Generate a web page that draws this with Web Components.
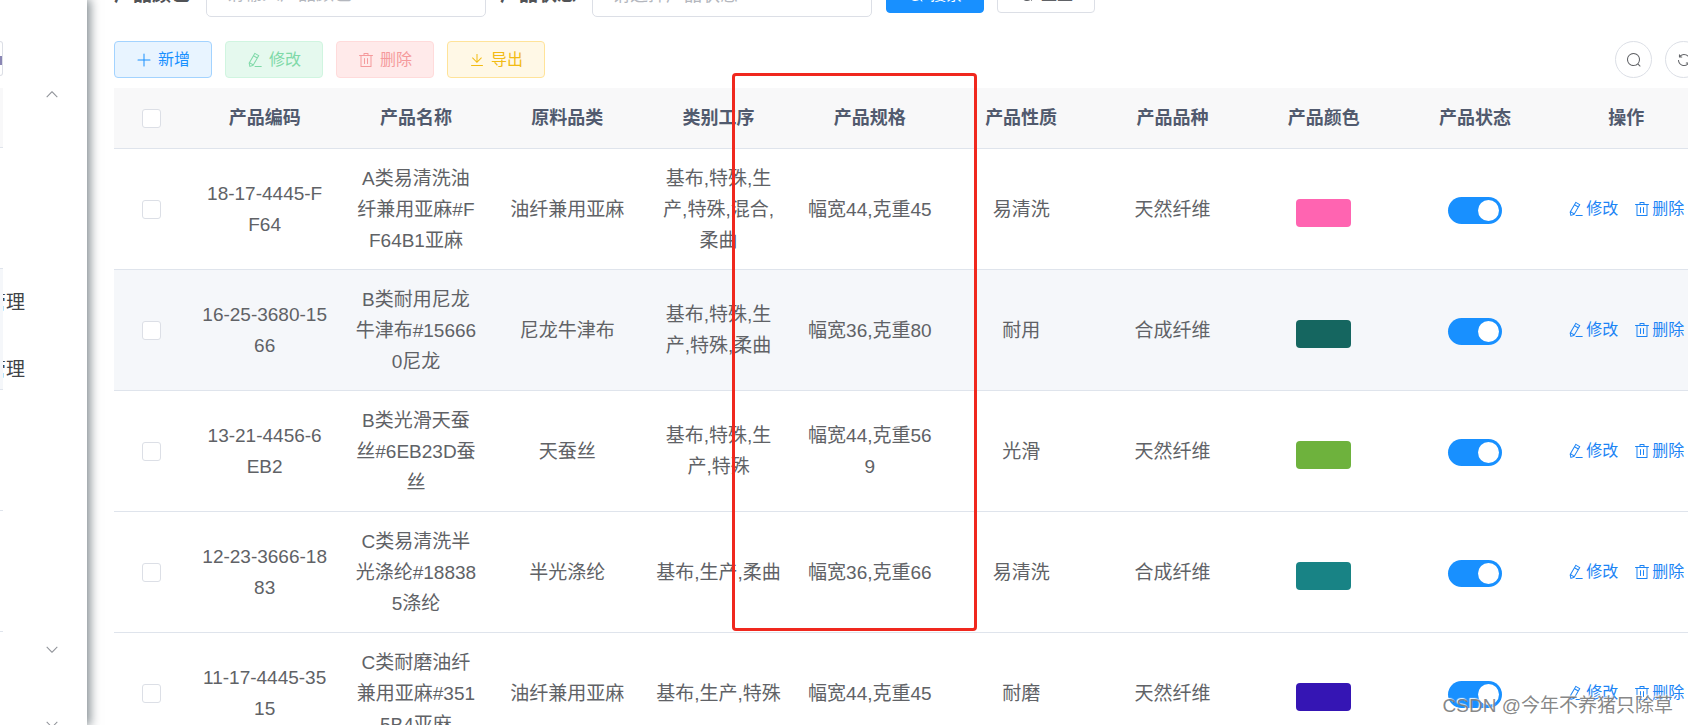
<!DOCTYPE html>
<html lang="zh-CN">
<head>
<meta charset="utf-8">
<title>产品管理</title>
<style>
  html, body { margin: 0; height: 100%; overflow: hidden; }
  body {
    background: #fff;
    color: #606266;
    font-family: "Liberation Sans", "Noto Sans CJK SC", sans-serif;
  }
</style>
</head>
<body>
<product-app></product-app>

<script>
const define = (name, html, setup) => {
  const template = document.createElement('template');
  template.innerHTML = html;
  customElements.define(name, class extends HTMLElement {
    constructor() {
      super();
      this.attachShadow({ mode: 'open' }).append(template.content.cloneNode(true));
    }
    connectedCallback() { if (setup) setup(this, this.shadowRoot); }
  });
};

const ICONS = {
  plus: 'M480 480V128a32 32 0 0 1 64 0v352h352a32 32 0 1 1 0 64H544v352a32 32 0 1 1-64 0V544H128a32 32 0 0 1 0-64z',
  edit: 'm199.04 672.64 193.984 112 224-387.968-193.92-112-224 388.032zm-23.872 60.16 32.896 148.288 144.896-45.696zM455.04 229.248l193.92 112 56.704-98.112-193.984-112-56.64 98.112zM104.32 708.8l384-665.024 304.768 175.936L409.152 884.8h.064l-248.448 78.336zm384 254.272v-64h448v64h-448z',
  trash: 'M160 256H96a32 32 0 0 1 0-64h256V95.936a32 32 0 0 1 32-32h256a32 32 0 0 1 32 32V192h256a32 32 0 1 1 0 64h-64v672a32 32 0 0 1-32 32H192a32 32 0 0 1-32-32zm448-64v-64H416v64zM224 896h576V256H224zm192-128a32 32 0 0 1-32-32V416a32 32 0 0 1 64 0v320a32 32 0 0 1-32 32m192 0a32 32 0 0 1-32-32V416a32 32 0 0 1 64 0v320a32 32 0 0 1-32 32',
  download: 'M160 832h704a32 32 0 1 1 0 64H160a32 32 0 1 1 0-64m384-253.696 236.288-236.352 45.248 45.248L508.8 704 192 387.2l45.248-45.248L480 584.704V128h64z',
  search: 'm795.904 750.72 124.992 124.928a32 32 0 0 1-45.248 45.248L750.656 795.904a416 416 0 1 1 45.248-45.248zM480 832a352 352 0 1 0 0-704 352 352 0 0 0 0 704',
  refresh: 'M771.776 794.88A384 384 0 0 1 128 512h64a320 320 0 0 0 555.712 216.448H654.72a32 32 0 1 1 0-64h149.056a32 32 0 0 1 32 32v148.928a32 32 0 1 1-64 0v-50.56zM276.288 295.616h92.992a32 32 0 0 1 0 64H220.16a32 32 0 0 1-32-32V178.56a32 32 0 0 1 64 0v50.56A384 384 0 0 1 896.128 512h-64a320 320 0 0 0-555.776-216.384z',
  up: 'm488.8 341.6-339.2 348 45.6 44.4L512 409l316.8 325 45.6-44.4-339.2-348a32 32 0 0 0-46.4 0z',
  down: 'm488.8 682.4-339.2-348 45.6-44.4L512 615l316.8-325 45.6 44.4-339.2 348a32 32 0 0 1-46.4 0z'
};

define('app-icon', `
  <style>
    :host { display: inline-flex; flex: none; width: 16px; height: 16px; }
    svg { width: 100%; height: 100%; fill: currentColor; }
  </style>
  <svg viewBox="0 0 1024 1024" aria-hidden="true"><path/></svg>`,
  (host, root) => root.querySelector('path').setAttribute('d', ICONS[host.getAttribute('name')]));

define('app-button', `
  <style>
    :host { display: inline-flex; --ink: #606266; --fill: #fff; --line: #dcdfe6; }
    :host([kind=search]) { --ink: #fff; --fill: #1890ff; --line: #1890ff; }
    :host([kind=primary]) { --ink: #1890ff; --fill: #e8f4ff; --line: #a3d3ff; }
    :host([kind=success]) { --ink: #7fd9a8; --fill: #e5f9ee; --line: #d0f5e0; }
    :host([kind=danger]) { --ink: #f59a9c; --fill: #ffeaea; --line: #ffdbdb; }
    :host([kind=warning]) { --ink: #f2bb13; --fill: #fff8e6; --line: #ffe399; }
    button {
      display: inline-flex; align-items: center; justify-content: center; gap: 6px;
      box-sizing: border-box; width: 98px; height: 37px; padding: 0;
      border: 1px solid var(--line); border-radius: 4px;
      background: var(--fill); color: var(--ink);
      font: inherit; font-size: 16px; line-height: 20px;
    }
    :host([round]) button { width: 37px; border-radius: 50%; }
    :host([link]) button {
      width: auto; height: auto; gap: 2px; border: 0; background: none; color: #1c84f5;
    }
  </style>
  <button type="button"><app-icon></app-icon><slot></slot></button>`,
  (host, root) => {
    const icon = document.createElement('app-icon');
    icon.setAttribute('name', host.getAttribute('icon'));
    const button = root.querySelector('button');
    root.querySelector('app-icon').replaceWith(icon);
    button.disabled = host.hasAttribute('disabled');
    if (host.hasAttribute('label')) button.setAttribute('aria-label', host.getAttribute('label'));
  });

define('status-switch', `
  <style>
    :host { display: flex; justify-content: center; margin-top: 3px; }
    input {
      appearance: none; box-sizing: border-box; display: flex; justify-content: flex-end;
      width: 54px; height: 27px; margin: 0; padding: 3px;
      border-radius: 14px; background: #1890ff;
    }
    input::before { content: ""; width: 21px; height: 21px; border-radius: 50%; background: #fff; }
  </style>
  <input type="checkbox" role="switch" aria-label="产品状态" checked>`);

define('search-form', `
  <style>
    :host { display: block; }
    form { display: flex; align-items: center; height: 45px; }
    label { width: 92px; color: #515356; font-size: 19px; font-weight: 700; line-height: 24px; }
    input, select {
      box-sizing: border-box; height: 45px; margin: 0 14px 0 0; padding: 0 19px;
      border: 1px solid #dcdfe6; border-radius: 5px; background: #fff;
      color: #b4b7be; font: inherit; font-size: 18px; line-height: 24px;
    }
    input { width: 280px; }
    input::placeholder { color: #b4b7be; opacity: 1; }
    select { width: 280px; appearance: none; }
    app-button { margin-right: 13px; }
  </style>
  <form>
    <label for="color">产品颜色</label>
    <input id="color" type="text" placeholder="请输入产品颜色">
    <label for="state">产品状态</label>
    <select id="state"><option>请选择产品状态</option></select>
    <app-button kind="search" icon="search">搜索</app-button>
    <app-button icon="refresh">重置</app-button>
  </form>`);

define('action-bar', `
  <style>
    :host { display: flex; gap: 13px; }
    span { flex: 1; }
  </style>
  <app-button kind="primary" icon="plus">新增</app-button>
  <app-button kind="success" icon="edit" disabled>修改</app-button>
  <app-button kind="danger" icon="trash" disabled>删除</app-button>
  <app-button kind="warning" icon="download">导出</app-button>
  <span></span>
  <app-button round icon="search" label="搜索栏"></app-button>
  <app-button round icon="refresh" label="刷新"></app-button>`);

const HEADS = ['产品编码', '产品名称', '原料品类', '类别工序', '产品规格', '产品性质', '产品品种', '产品颜色', '产品状态', '操作'];
const ROWS = [
  ['18-17-4445-FF64', 'A类易清洗油纤兼用亚麻#FF64B1亚麻', '油纤兼用亚麻', '基布,特殊,生产,特殊,混合,柔曲', '幅宽44,克重45', '易清洗', '天然纤维', '#ff64b1'],
  ['16-25-3680-1566', 'B类耐用尼龙牛津布#156660尼龙', '尼龙牛津布', '基布,特殊,生产,特殊,柔曲', '幅宽36,克重80', '耐用', '合成纤维', '#156660'],
  ['13-21-4456-6EB2', 'B类光滑天蚕丝#6EB23D蚕丝', '天蚕丝', '基布,特殊,生产,特殊', '幅宽44,克重569', '光滑', '天然纤维', '#6eb23d'],
  ['12-23-3666-1883', 'C类易清洗半光涤纶#188385涤纶', '半光涤纶', '基布,生产,柔曲', '幅宽36,克重66', '易清洗', '合成纤维', '#188385'],
  ['11-17-4445-3515', 'C类耐磨油纤兼用亚麻#3515B4亚麻', '油纤兼用亚麻', '基布,生产,特殊', '幅宽44,克重45', '耐磨', '天然纤维', '#3515b4']
];

define('product-table', `
  <style>
    :host { display: block; }
    table { width: 100%; table-layout: fixed; border-collapse: separate; border-spacing: 0; text-align: center; }
    .pick { width: 75px; }
    th, td { box-sizing: border-box; border-bottom: 1px solid #dfe4ec; word-break: break-all; }
    th { height: 61px; padding: 0; background: #f8f8f9; color: #515a6e; font-size: 18px; font-weight: 700; line-height: 24px; }
    td { height: 121px; padding: 0 13px; font-size: 19px; line-height: 31px; }
    th.pick, td.pick { padding: 0; }
    tr.hover td { background: #f5f7fa; }
    .pick input {
      appearance: none; display: block; box-sizing: border-box; width: 19px; height: 19px;
      margin: 0 auto; border: 1px solid #dcdfe6; border-radius: 3px; background: #fff;
    }
    .swatch { width: 55px; height: 28px; margin: 8px auto 0; border-radius: 4px; }
    td.ops { padding: 0; }
    .links { display: flex; justify-content: center; gap: 16px; }
  </style>
  <table><thead></thead><tbody></tbody></table>`,
  (host, root) => {
    root.querySelector('thead').innerHTML =
      '<tr><th class="pick"><input type="checkbox" aria-label="全选"></th>' +
      HEADS.map(h => `<th>${h}</th>`).join('') + '</tr>';
    root.querySelector('tbody').innerHTML = ROWS.map((row, i) =>
      `<tr${i === 1 ? ' class="hover"' : ''}><td class="pick"><input type="checkbox" aria-label="选择"></td>` +
      row.slice(0, 7).map(t => `<td>${t}</td>`).join('') +
      `<td><div class="swatch" style="background:${row[7]}"></div></td>
       <td><status-switch></status-switch></td>
       <td class="ops"><div class="links"><app-button link icon="edit">修改</app-button><app-button link icon="trash">删除</app-button></div></td></tr>`
    ).join('');
  });

define('side-menu', `
  <style>
    :host {
      display: flex; flex: none; width: 87px; position: relative; overflow: visible;
      background: #fff; box-shadow: 2px 0 10px 1px rgba(0, 20, 30, .5);
    }
    .edge { width: 3px; overflow: hidden; }
    .edge div { box-sizing: border-box; height: 121px; border-bottom: 1px solid #dfe4ec; }
    .edge .tool { height: 35px; margin: 41px 0 12px; border: solid #dcdfe6; border-width: 1px 1px 1px 0; border-radius: 0 4px 4px 0; }
    .edge .tool::before { content: ""; display: block; width: 2px; height: 9px; margin-top: 14px; background: #8a86b4; }
    .edge .head { height: 60px; background: #f8f8f9; }
    .edge .lit { background: #f5f7fa; }
    nav { flex: 1; overflow: hidden; padding-top: 56px; }
    button {
      display: flex; align-items: center; justify-content: center; width: 100%; height: 75px; padding: 0 0 0 14px;
      border: 0; background: none; color: #909399;
    }
    ul { list-style: none; margin: 0; padding: 4px 0 8px; }
    li { height: 67px; }
    a { display: block; margin-left: -16px; color: #404246; font-size: 19px; line-height: 67px; text-decoration: none; }
  </style>
  <div class="edge"><div class="tool"></div><div class="head"></div><div></div><div class="lit"></div><div></div><div></div></div>
  <nav>
    <button type="button" aria-label="收起"><app-icon name="up"></app-icon></button>
    <ul><li></li><li></li><li><a href="#a">管理</a></li><li><a href="#b">管理</a></li><li></li><li></li><li></li></ul>
    <button type="button" aria-label="展开"><app-icon name="down"></app-icon></button>
    <button type="button" aria-label="展开"><app-icon name="down"></app-icon></button>
  </nav>`);

define('product-app', `
  <style>
    :host { display: flex; height: 100vh; overflow: hidden; position: relative; }
    /* The list is scrolled: its form is partly above the view, its last column partly beyond it. */
    main { flex: 1; min-width: 0; margin: -28px -14px 0 27px; }
    action-bar { margin: 24px 0 10px; }
    .mark {
      position: absolute; left: 732px; top: 73px; box-sizing: border-box; width: 245px; height: 558px;
      border: 3px solid #f0281e; border-radius: 4px;
    }
    .credit {
      position: absolute; right: 15px; bottom: 6px; color: rgba(120, 120, 120, .9);
      font-size: 19px; line-height: 26px; text-shadow: -1px -1px 1px #fff;
    }
  </style>
  <side-menu></side-menu>
  <main>
    <search-form></search-form>
    <action-bar></action-bar>
    <product-table></product-table>
  </main>
  <div class="mark"></div>
  <div class="credit">CSDN @今年不养猪只除草</div>`);
</script>
</body>
</html>
